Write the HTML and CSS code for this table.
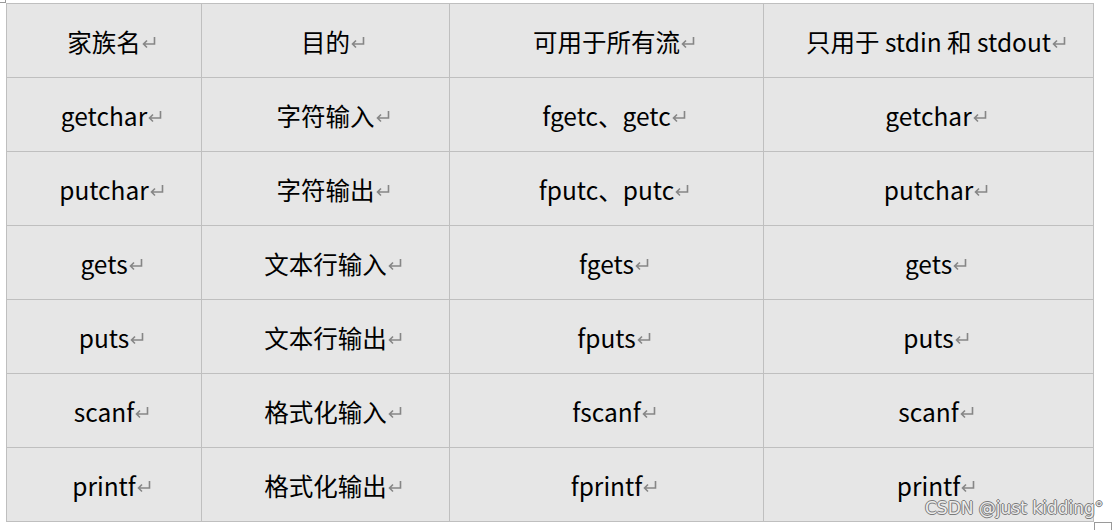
FILE: index.html
```html
<!DOCTYPE html>
<html lang="zh">
<head>
<meta charset="utf-8">
<link rel="stylesheet" href="styles.css">
</head>
<body>
<div class="page">
  <span class="corner-mark"></span>
  <table class="grid">
    <colgroup>
      <col class="c1"><col class="c2"><col class="c3"><col class="c4">
    </colgroup>
    <tr><td>家族名<svg class="ret" viewBox="0 0 16 14"><path d="M13.5 2V9H2.5M6 5.5L2.5 9L6 12.5"/></svg></td><td>目的<svg class="ret" viewBox="0 0 16 14"><path d="M13.5 2V9H2.5M6 5.5L2.5 9L6 12.5"/></svg></td><td>可用于所有流<svg class="ret" viewBox="0 0 16 14"><path d="M13.5 2V9H2.5M6 5.5L2.5 9L6 12.5"/></svg></td><td>只用于 stdin 和 stdout<svg class="ret" viewBox="0 0 16 14"><path d="M13.5 2V9H2.5M6 5.5L2.5 9L6 12.5"/></svg></td></tr>
    <tr><td>getchar<svg class="ret" viewBox="0 0 16 14"><path d="M13.5 2V9H2.5M6 5.5L2.5 9L6 12.5"/></svg></td><td>字符输入<svg class="ret" viewBox="0 0 16 14"><path d="M13.5 2V9H2.5M6 5.5L2.5 9L6 12.5"/></svg></td><td>fgetc、getc<svg class="ret" viewBox="0 0 16 14"><path d="M13.5 2V9H2.5M6 5.5L2.5 9L6 12.5"/></svg></td><td>getchar<svg class="ret" viewBox="0 0 16 14"><path d="M13.5 2V9H2.5M6 5.5L2.5 9L6 12.5"/></svg></td></tr>
    <tr><td>putchar<svg class="ret" viewBox="0 0 16 14"><path d="M13.5 2V9H2.5M6 5.5L2.5 9L6 12.5"/></svg></td><td>字符输出<svg class="ret" viewBox="0 0 16 14"><path d="M13.5 2V9H2.5M6 5.5L2.5 9L6 12.5"/></svg></td><td>fputc、putc<svg class="ret" viewBox="0 0 16 14"><path d="M13.5 2V9H2.5M6 5.5L2.5 9L6 12.5"/></svg></td><td>putchar<svg class="ret" viewBox="0 0 16 14"><path d="M13.5 2V9H2.5M6 5.5L2.5 9L6 12.5"/></svg></td></tr>
    <tr><td>gets<svg class="ret" viewBox="0 0 16 14"><path d="M13.5 2V9H2.5M6 5.5L2.5 9L6 12.5"/></svg></td><td>文本行输入<svg class="ret" viewBox="0 0 16 14"><path d="M13.5 2V9H2.5M6 5.5L2.5 9L6 12.5"/></svg></td><td>fgets<svg class="ret" viewBox="0 0 16 14"><path d="M13.5 2V9H2.5M6 5.5L2.5 9L6 12.5"/></svg></td><td>gets<svg class="ret" viewBox="0 0 16 14"><path d="M13.5 2V9H2.5M6 5.5L2.5 9L6 12.5"/></svg></td></tr>
    <tr><td>puts<svg class="ret" viewBox="0 0 16 14"><path d="M13.5 2V9H2.5M6 5.5L2.5 9L6 12.5"/></svg></td><td>文本行输出<svg class="ret" viewBox="0 0 16 14"><path d="M13.5 2V9H2.5M6 5.5L2.5 9L6 12.5"/></svg></td><td>fputs<svg class="ret" viewBox="0 0 16 14"><path d="M13.5 2V9H2.5M6 5.5L2.5 9L6 12.5"/></svg></td><td>puts<svg class="ret" viewBox="0 0 16 14"><path d="M13.5 2V9H2.5M6 5.5L2.5 9L6 12.5"/></svg></td></tr>
    <tr><td>scanf<svg class="ret" viewBox="0 0 16 14"><path d="M13.5 2V9H2.5M6 5.5L2.5 9L6 12.5"/></svg></td><td>格式化输入<svg class="ret" viewBox="0 0 16 14"><path d="M13.5 2V9H2.5M6 5.5L2.5 9L6 12.5"/></svg></td><td>fscanf<svg class="ret" viewBox="0 0 16 14"><path d="M13.5 2V9H2.5M6 5.5L2.5 9L6 12.5"/></svg></td><td>scanf<svg class="ret" viewBox="0 0 16 14"><path d="M13.5 2V9H2.5M6 5.5L2.5 9L6 12.5"/></svg></td></tr>
    <tr><td>printf<svg class="ret" viewBox="0 0 16 14"><path d="M13.5 2V9H2.5M6 5.5L2.5 9L6 12.5"/></svg></td><td>格式化输出<svg class="ret" viewBox="0 0 16 14"><path d="M13.5 2V9H2.5M6 5.5L2.5 9L6 12.5"/></svg></td><td>fprintf<svg class="ret" viewBox="0 0 16 14"><path d="M13.5 2V9H2.5M6 5.5L2.5 9L6 12.5"/></svg></td><td>printf<svg class="ret" viewBox="0 0 16 14"><path d="M13.5 2V9H2.5M6 5.5L2.5 9L6 12.5"/></svg></td></tr>
  </table>
  <span class="watermark">CSDN @just kidding°</span>
  <span class="end-box"></span>
</div>
</body>
</html>
```

FILE: styles.css
```css
html, body {
  margin: 0;
  padding: 0;
  background: #ffffff;
}
.page {
  position: relative;
  width: 1114px;
  height: 530px;
  padding: 3px 0 0 6px;
  box-sizing: border-box;
}
.grid {
  border-collapse: collapse;
  table-layout: fixed;
  width: 1087px;
  background: #e6e6e6;
  font-family: "Noto Sans CJK SC", "Noto Sans", sans-serif;
  font-size: 24.5px;
  color: #000;
}
.c1 { width: 195px; }
.c2 { width: 248px; }
.c3 { width: 314px; }
.c4 { width: 330px; }
.grid td {
  border: 1px solid #bfbfbf;
  height: 74px;
  padding: 3px 0 0 0;
  box-sizing: border-box;
  text-align: center;
  vertical-align: middle;
  white-space: nowrap;
  line-height: 1;
}
.ret {
  display: inline-block;
  width: 16px;
  height: 14px;
  margin-right: -16px;
  vertical-align: 3px;
}
.ret path {
  fill: none;
  stroke: #868686;
  stroke-width: 1.6;
}
.corner-mark {
  position: absolute;
  left: 0;
  top: 0;
  width: 5px;
  height: 2px;
  border-right: 1px solid #9a9a9a;
  border-bottom: 1px solid #9a9a9a;
}
.watermark {
  position: absolute;
  left: 925px;
  top: 498px;
  font-family: "DejaVu Sans", sans-serif;
  font-size: 17px;
  color: #ececec;
  text-shadow: 1px 0 0 #7a7a7a, -1px 0 0 #7a7a7a, 0 1px 0 #7a7a7a, 0 -1px 0 #7a7a7a;
  white-space: nowrap;
}
.end-box {
  position: absolute;
  left: 1094px;
  top: 522px;
  width: 16px;
  height: 10px;
  border: 1px solid #9a9a9a;
}
```
